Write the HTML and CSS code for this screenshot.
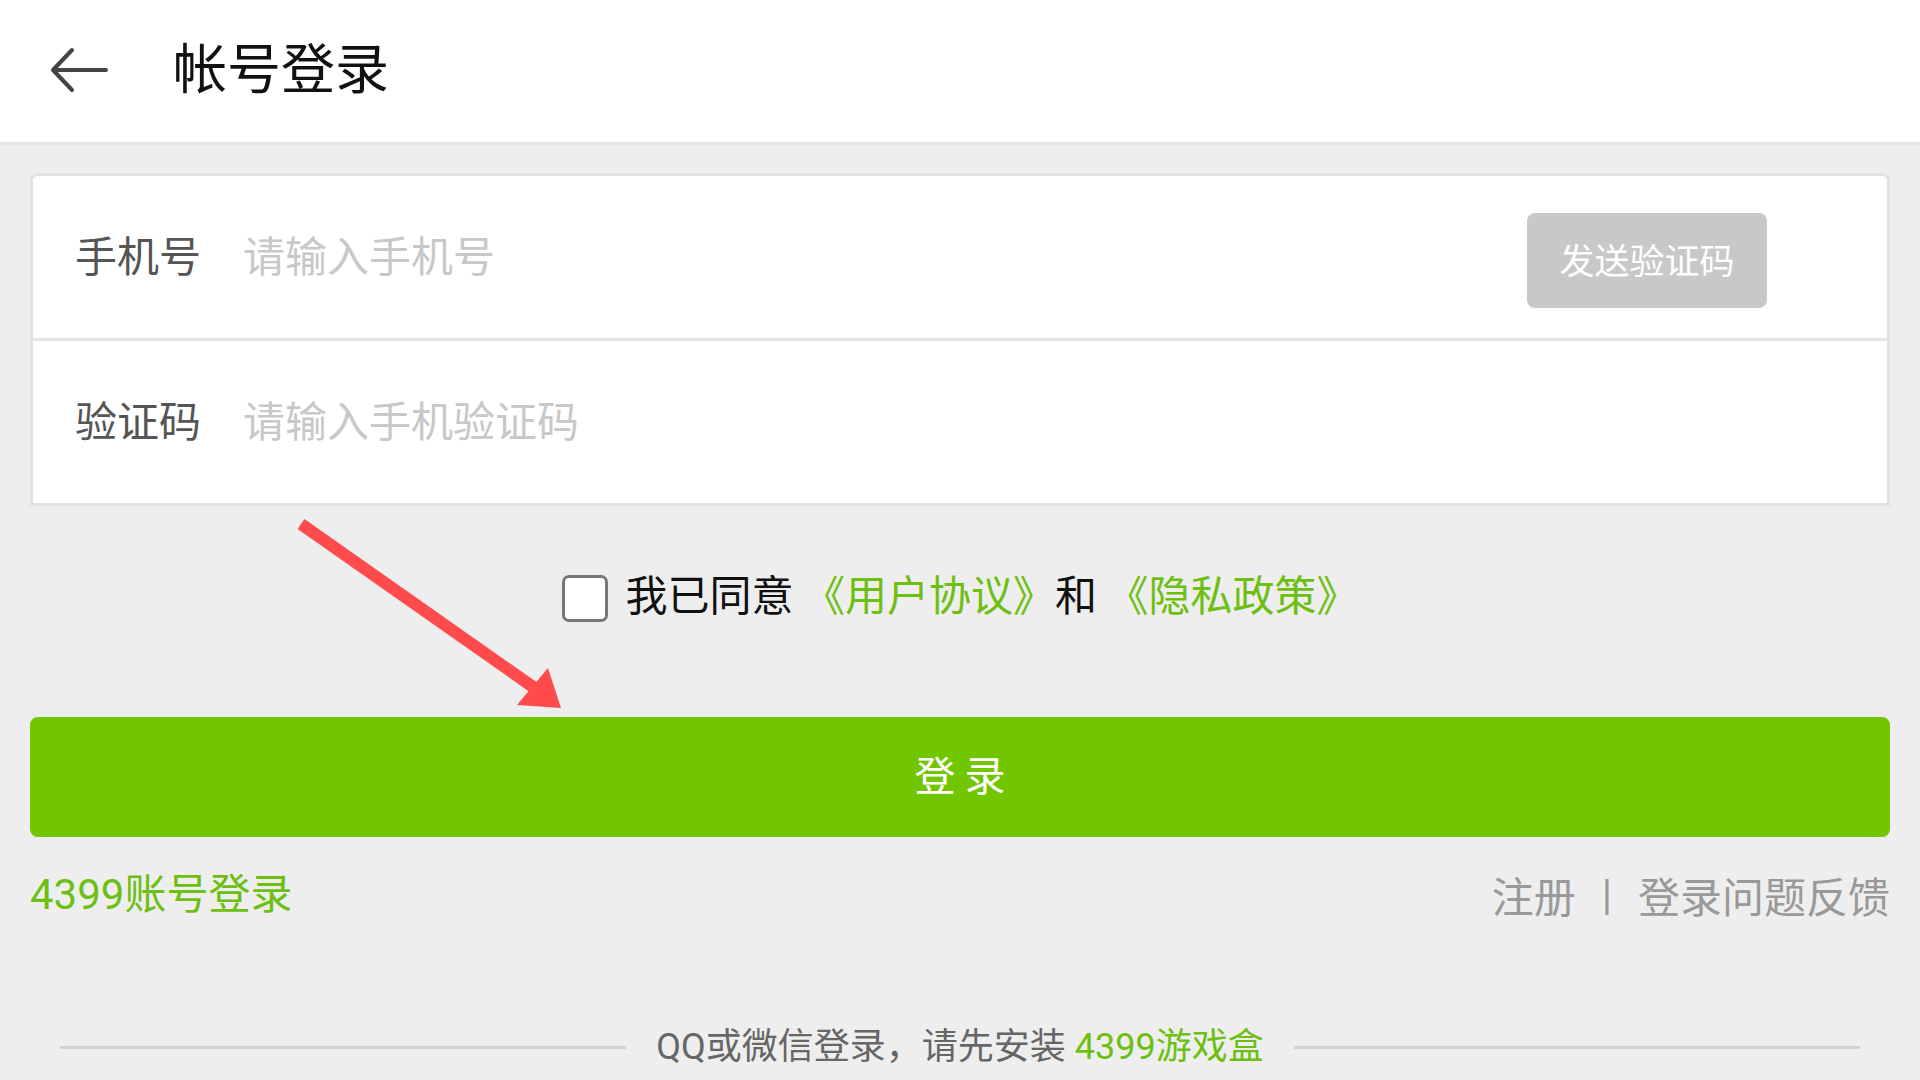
FILE: index.html
```html
<!DOCTYPE html>
<html lang="zh-CN">

<head>
    <meta charset="UTF-8">
    <meta name="viewport" content="width=device-width, initial-scale=1.0">
    <title>帐号登录</title>
    <link rel="stylesheet" href="styles.css">
</head>

<body>
    <div class="header">
        <svg class="back" width="58" height="46" viewBox="0 0 58 46">
            <path d="M56 23 H4 M22 3 L3 23 L22 43" fill="none" stroke="#444" stroke-width="4" stroke-linecap="round" stroke-linejoin="round" />
        </svg>
        <h1 class="title">帐号登录</h1>
    </div>

    <div class="main">
        <div class="card">
            <div class="row row-top">
                <span class="label">手机号</span>
                <input class="field" type="text" placeholder="请输入手机号">
                <button class="send-btn">发送验证码</button>
            </div>
            <div class="row">
                <span class="label">验证码</span>
                <input class="field" type="text" placeholder="请输入手机验证码">
            </div>
        </div>

        <div class="agree">
            <span class="check"></span>
            <span class="agree-text">我已同意 <span class="green">《用户协议》</span>和 <span class="green">《隐私政策》</span></span>
        </div>

        <button class="login-btn">登 录</button>

        <div class="links">
            <span class="green">4399账号登录</span>
            <div class="links-right">
                <span>注册</span>
                <span class="sep">|</span>
                <span>登录问题反馈</span>
            </div>
        </div>

        <div class="other">
            <span class="line"></span>
            <span class="other-text">QQ或微信登录，请先安装 <span class="green">4399游戏盒</span></span>
            <span class="line"></span>
        </div>
    </div>

    <!-- red annotation arrow -->
    <svg class="mark" width="1920" height="1080" viewBox="0 0 1920 1080">
        <line x1="301" y1="524" x2="536" y2="689" stroke="#ff4b4b" stroke-width="12" />
        <polygon points="561,708 517,705 548,668" fill="#ff4b4b" />
    </svg>
</body>

</html>
```

FILE: styles.css
```css
body {
    margin: 0;
    padding: 0;
    background-color: #eeeeee;
    font-family: Roboto, "Noto Sans CJK SC", sans-serif;
    position: relative;
    height: 1080px;
    overflow: hidden;
}

.header {
    height: 142px;
    background-color: #fff;
    border-bottom: 3px solid #e4e4e4;
    display: flex;
    align-items: center;
}

.back {
    margin-left: 50px;
    margin-top: -2px;
}

.title {
    margin: 0 0 10px 65px;
    font-size: 54px;
    font-weight: normal;
    line-height: 60px;
    color: #111;
    font-family: "Noto Sans CJK SC", sans-serif;
}

.main {
    padding: 0 30px;
}

.card {
    margin-top: 28px;
    background-color: #fff;
    border: 3px solid #e2e2e2;
    border-radius: 8px 8px 0 0;
}

.row {
    height: 156px;
    padding: 0 0 6px 42px;
    display: flex;
    align-items: center;
}

.row-top {
    border-bottom: 3px solid #e4e4e4;
}

.label {
    font-size: 42px;
    line-height: 50px;
    color: #555;
    font-family: "Noto Sans CJK SC", sans-serif;
}

.field {
    flex: 1;
    margin-left: 42px;
    border: none;
    outline: none;
    padding: 0;
    background: transparent;
    font-size: 42px;
    line-height: 50px;
    font-family: "Noto Sans CJK SC", sans-serif;
    color: #333;
}

.field::placeholder {
    color: #c8c8c8;
}

.send-btn {
    width: 240px;
    height: 95px;
    margin-right: 120px;
    margin-top: 12px;
    padding: 0 0 4px;
    border: none;
    border-radius: 8px;
    background-color: #c8c8c8;
    color: #fff;
    font-size: 35px;
    font-family: "Noto Sans CJK SC", sans-serif;
}

.agree {
    margin-top: 66px;
    height: 50px;
    display: flex;
    justify-content: center;
    align-items: center;
}

.check {
    width: 40px;
    height: 41px;
    border: 3px solid #777;
    border-radius: 7px;
    background-color: #fff;
    margin-top: 2px;
}

.agree-text {
    margin-left: 18px;
    padding-bottom: 8px;
    font-size: 42px;
    line-height: 50px;
    color: #111;
    font-family: "Noto Sans CJK SC", sans-serif;
}

.green {
    color: #6dbf12;
}

.login-btn {
    display: block;
    width: 100%;
    height: 120px;
    margin-top: 95px;
    padding: 0 0 9px;
    border: none;
    border-radius: 8px;
    background-color: #71c600;
    color: #fff;
    font-size: 41px;
    font-family: "Noto Sans CJK SC", sans-serif;
}

.links {
    margin-top: 28px;
    height: 60px;
    display: flex;
    justify-content: space-between;
    align-items: center;
    font-size: 42px;
    line-height: 60px;
}

.links-right {
    display: flex;
    color: #999;
    font-family: "Noto Sans CJK SC", sans-serif;
}

.sep {
    margin: 0 26px;
    font-family: Roboto, sans-serif;
    font-size: 42px;
}

.other {
    margin: 100px 30px 0;
    height: 44px;
    display: flex;
    align-items: center;
}

.line {
    flex: 1;
    height: 3px;
    background-color: #d2d2d2;
}

.other-text {
    padding: 0 30px;
    font-size: 36px;
    line-height: 44px;
    color: #666;
}

.mark {
    position: absolute;
    top: 0;
    left: 0;
    pointer-events: none;
}
```
